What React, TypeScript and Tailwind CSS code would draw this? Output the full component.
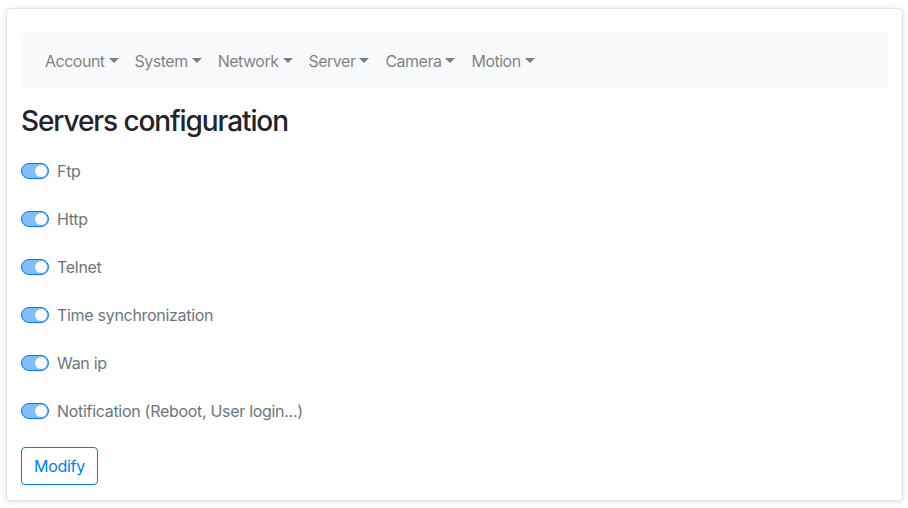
import React from "react";

const menus = ["Account", "System", "Network", "Server", "Camera", "Motion"];

const services = [
  "Ftp",
  "Http",
  "Telnet",
  "Time synchronization",
  "Wan ip",
  "Notification (Reboot, User login...)",
];

const Caret: React.FC = () => (
  <span className="ml-[4px] inline-block align-[4px] w-0 h-0 border-t-[5px] border-t-current border-x-[5px] border-x-transparent" />
);

const Switch: React.FC<{ label: string }> = ({ label }) => (
  <label className="flex items-center h-6 text-[16px] tracking-[-0.3px] text-[#6c757d]">
    <span className="relative w-[28px] h-[16px] rounded-full border border-[#007bff] bg-[#80bdff] mr-[8px] shrink-0">
      <span className="absolute top-[1px] left-[13px] w-[12px] h-[12px] rounded-full bg-white" />
    </span>
    {label}
  </label>
);

export default function App() {
  return (
    <div
      className="min-h-screen bg-white pt-[8px] pl-[6px]"
      style={{ fontFamily: "Inter, 'Helvetica Neue', Arial, sans-serif" }}
    >
      <div className="w-[897px] h-[493px] border border-[#e3e3e3] rounded-[4px] bg-white shadow-[0_1px_6px_rgba(0,0,0,0.12)] px-[14px] pt-[24px]">
        <nav className="h-[56px] bg-[#f8f9fa] flex items-center px-[16px]">
          {menus.map((m) => (
            <span
              key={m}
              className="px-[8px] text-[16px] tracking-[-0.5px] text-[rgba(0,0,0,0.5)] leading-6"
            >
              {m}
              <Caret />
            </span>
          ))}
        </nav>

        <h3 className="mt-[15px] text-[28px] leading-[34px] font-medium text-[#212529] tracking-[-1.1px]">
          Servers configuration
        </h3>

        <div className="mt-[21px] flex flex-col gap-6">
          {services.map((s) => (
            <Switch key={s} label={s} />
          ))}
        </div>

        <button className="mt-6 h-[38px] px-[12px] border border-[#007bff] rounded-[4px] text-[16px] tracking-[-0.3px] text-[#007bff] bg-white">
          Modify
        </button>
      </div>
    </div>
  );
}
